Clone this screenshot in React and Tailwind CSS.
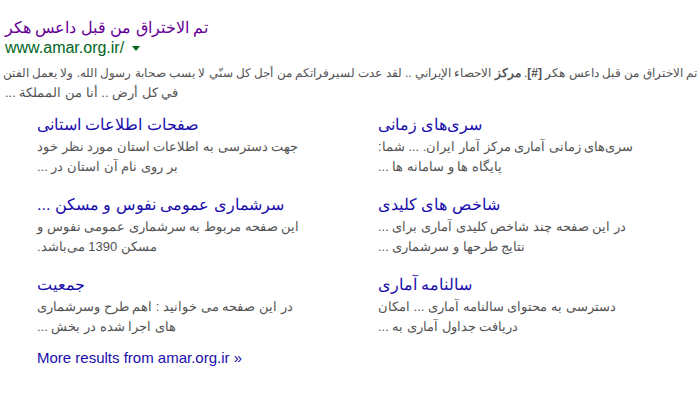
const sitelinks = [
  {
    title: 'صفحات اطلاعات استانی',
    lines: ['جهت دسترسی به اطلاعات استان مورد نظر خود', 'بر روی نام آن استان در ...'],
  },
  {
    title: 'سری‌های زمانی',
    lines: ['سری‌های زمانی آماری مرکز آمار ایران. ... شما:', 'پایگاه ها و سامانه ها ...'],
  },
  {
    title: 'سرشماری عمومی نفوس و مسکن ...',
    lines: ['این صفحه مربوط به سرشماری عمومی نفوس و', 'مسکن 1390 می‌باشد.'],
  },
  {
    title: 'شاخص های کلیدی',
    lines: ['در این صفحه چند شاخص کلیدی آماری برای ...', 'نتایج طرحها و سرشماری ...'],
  },
  {
    title: 'جمعیت',
    lines: ['در این صفحه می خوانید : اهم طرح وسرشماری', 'های اجرا شده در بخش ...'],
  },
  {
    title: 'سالنامه آماری',
    lines: ['دسترسی به محتوای سالنامه آماری ... امکان', 'دریافت جداول آماری به ...'],
  },
];

const Sitelink = ({ title, lines }) => (
  <div className="h-[80px]">
    <a href="#" dir="rtl" className="block h-[23px] text-left text-[16px] leading-[22px] text-[#1a0dab]">
      {title}
    </a>
    <div dir="rtl" className="text-left text-[13px] leading-[20px] text-[#545454]">
      {lines.map((l, i) => (
        <div key={i} className="h-[20px] whitespace-nowrap">{l}</div>
      ))}
    </div>
  </div>
);

const App = () => {
  return (
    <div
      className="w-[700px] h-[393px] bg-white overflow-hidden pt-[17px]"
      style={{ fontFamily: '"Liberation Sans", Arial, sans-serif' }}
    >
      <div className="pl-[5px]">
        <a href="#" dir="rtl" className="block h-[21px] text-left text-[16px] leading-[22px] text-[#660099]">
          تم الاختراق من قبل داعس هكر
        </a>
        <div className="flex items-center h-[19px] text-[16px] leading-[19px] text-[#006621]">
          <span>www.amar.org.ir/</span>
          <span className="ml-[8px] mt-[2px] w-0 h-0 border-l-[4px] border-r-[4px] border-t-[5px] border-l-transparent border-r-transparent border-t-[#006621]" />
        </div>
      </div>
      <div className="mt-[6px] text-[#545454] overflow-hidden">
        <div dir="rtl" className="h-[20px] whitespace-nowrap text-right pr-[3px] text-[12px] leading-[20px]">
          تم الاختراق من قبل داعس هكر <b className="font-bold">[#]</b>. <b className="font-bold">مركز</b> الاحصاء الإيراني .. لقد عدت لسيرفراتكم من أجل كل سنّي لا يسب صحابة رسول الله. ولا يعمل الفتن
        </div>
        <div dir="rtl" className="h-[20px] whitespace-nowrap text-left pl-[5px] text-[13px] leading-[20px]">
          في كل أرض .. أنا من المملكة ...
        </div>
      </div>
      <div className="grid grid-cols-[341px_1fr] pl-[37px] mt-[11px]">
        {sitelinks.map((s, i) => (
          <Sitelink key={i} title={s.title} lines={s.lines} />
        ))}
      </div>
      <a href="#" className="block pl-[37px] -mt-[5px] text-[15px] leading-[18px] text-[#1a0dab]">
        More results from amar.org.ir »
      </a>
    </div>
  );
};

export default App;
